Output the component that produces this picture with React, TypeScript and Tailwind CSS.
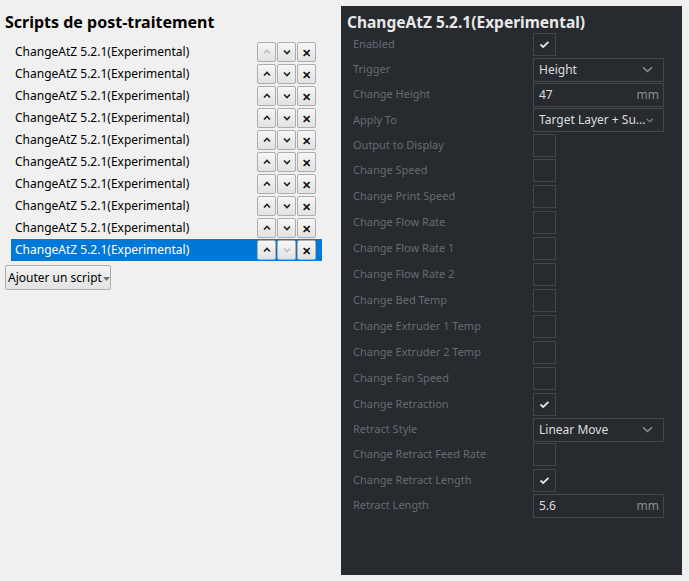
import React from 'react';

type Setting = {
  label: string;
  kind: 'check' | 'combo' | 'text';
  value?: string;
  checked?: boolean;
  unit?: string;
  h: string;
};

const settings: Setting[] = [
  { label: 'Enabled', kind: 'check', checked: true, h: 'h-[25px]' },
  { label: 'Trigger', kind: 'combo', value: 'Height', h: 'h-[25px]' },
  { label: 'Change Height', kind: 'text', value: '47', unit: 'mm', h: 'h-[25px]' },
  { label: 'Apply To', kind: 'combo', value: 'Target Layer + Su...', h: 'h-[26px]' },
  { label: 'Output to Display', kind: 'check', h: 'h-[25px]' },
  { label: 'Change Speed', kind: 'check', h: 'h-[25px]' },
  { label: 'Change Print Speed', kind: 'check', h: 'h-[26px]' },
  { label: 'Change Flow Rate', kind: 'check', h: 'h-[26px]' },
  { label: 'Change Flow Rate 1', kind: 'check', h: 'h-[26px]' },
  { label: 'Change Flow Rate 2', kind: 'check', h: 'h-[26px]' },
  { label: 'Change Bed Temp', kind: 'check', h: 'h-[26px]' },
  { label: 'Change Extruder 1 Temp', kind: 'check', h: 'h-[26px]' },
  { label: 'Change Extruder 2 Temp', kind: 'check', h: 'h-[26px]' },
  { label: 'Change Fan Speed', kind: 'check', h: 'h-[26px]' },
  { label: 'Change Retraction', kind: 'check', checked: true, h: 'h-[26px]' },
  { label: 'Retract Style', kind: 'combo', value: 'Linear Move', h: 'h-[25px]' },
  { label: 'Change Retract Feed Rate', kind: 'check', h: 'h-[25px]' },
  { label: 'Change Retract Length', kind: 'check', checked: true, h: 'h-[26px]' },
  { label: 'Retract Length', kind: 'text', value: '5.6', unit: 'mm', h: 'h-[25px]' },
];

const Chevron = ({ dir, color }: { dir: 'up' | 'down'; color: string }) => (
  <svg width="8" height="6" viewBox="0 0 8 6">
    <path
      d={dir === 'up' ? 'M1 4.5 L4 1.5 L7 4.5' : 'M1 1.5 L4 4.5 L7 1.5'}
      fill="none"
      stroke={color}
      strokeWidth="1.6"
    />
  </svg>
);

const SmallBtn = ({ children }: { children: React.ReactNode }) => (
  <div className="w-[19px] h-[20px] flex items-center justify-center border border-[#adadad] rounded-[2px] bg-gradient-to-b from-[#f6f6f6] to-[#e2e2e2]">
    {children}
  </div>
);

const CheckMark = () => (
  <svg width="11" height="9" viewBox="0 0 11 9">
    <path d="M1.5 4.5 L4.2 7 L9.5 1.8" fill="none" stroke="#e6e6e6" strokeWidth="1.8" />
  </svg>
);

const Control = ({ s }: { s: Setting }) => {
  if (s.kind === 'check') {
    return (
      <div className="w-[23px] h-[23px] border border-[#42464c] flex items-center justify-center">
        {s.checked && <CheckMark />}
      </div>
    );
  }
  if (s.kind === 'combo') {
    return (
      <div className="w-[131px] h-[24px] border border-[#44484e] flex items-center pl-[5px] pr-[10px] justify-between">
        <span className="text-[12px] text-[#dedede] whitespace-nowrap">{s.value}</span>
        <svg width="11" height="7" viewBox="0 0 11 7">
          <path d="M1 1.2 L5.5 5.5 L10 1.2" fill="none" stroke="#8e9298" strokeWidth="1.5" />
        </svg>
      </div>
    );
  }
  return (
    <div className="w-[131px] h-[24px] border border-[#44484e] flex items-center pl-[5px] pr-[4px] justify-between">
      <span className="text-[12px] text-[#dedede]">{s.value}</span>
      <span className="text-[12px] text-[#8a8e94]">{s.unit}</span>
    </div>
  );
};

export default function App() {
  const scripts = Array.from({ length: 10 }, (_, i) => i);

  return (
    <div
      className="w-[689px] h-[581px] bg-[#f0f0f0] flex overflow-hidden"
      style={{ fontFamily: '"Noto Sans", "Open Sans", sans-serif' }}
    >
      {/* liste des scripts */}
      <div className="w-[341px] flex flex-col pt-[11px]">
        <h1 className="pl-[5px] text-[16px] leading-[22px] font-bold text-black">Scripts de post-traitement</h1>
        <div className="mt-[8px] ml-[11px] w-[311px] flex flex-col">
          {scripts.map(i => {
            const selected = i === 9;
            return (
              <div
                key={i}
                className={`h-[22px] flex items-center justify-between pl-[4px] pr-[6px] ${selected ? 'bg-[#0078d7] text-white' : 'text-black'}`}
              >
                <span className="text-[12px]">ChangeAtZ 5.2.1(Experimental)</span>
                <div className="flex gap-[1px]">
                  <SmallBtn>
                    <Chevron dir="up" color={i === 0 ? '#bdbdbd' : '#222'} />
                  </SmallBtn>
                  <SmallBtn>
                    <Chevron dir="down" color={i === 9 ? '#bdbdbd' : '#222'} />
                  </SmallBtn>
                  <SmallBtn>
                    <span className="text-[11px] font-bold text-[#111] leading-none">✕</span>
                  </SmallBtn>
                </div>
              </div>
            );
          })}
        </div>
        <div className="mt-[4px] ml-[5px] w-[106px] h-[25px] border border-[#adadad] rounded-[2px] bg-gradient-to-b from-[#f2f2f2] to-[#e3e3e3] flex items-center pl-[2px]">
          <span className="text-[12px] text-black">Ajouter un script</span>
          <svg width="7" height="4" viewBox="0 0 7 4" className="ml-[1px] mt-[2px]">
            <path d="M0 0 L7 0 L3.5 4 Z" fill="#707070" />
          </svg>
        </div>
      </div>

      {/* paramètres */}
      <div className="mt-[6px] w-[341px] h-[569px] bg-[#272a2f] flex flex-col">
        <h2 className="pl-[6px] pt-[6px] text-[15.5px] leading-[20px] font-bold text-[#e8e8e8]">
          ChangeAtZ 5.2.1(Experimental)
        </h2>
        <div className="flex flex-col">
          {settings.map(s => (
            <div key={s.label} className={`${s.h} flex items-center pl-[12px]`}>
              <span className="w-[180px] text-[11px] text-[#676b71] whitespace-nowrap">{s.label}</span>
              <Control s={s} />
            </div>
          ))}
        </div>
      </div>
    </div>
  );
}
